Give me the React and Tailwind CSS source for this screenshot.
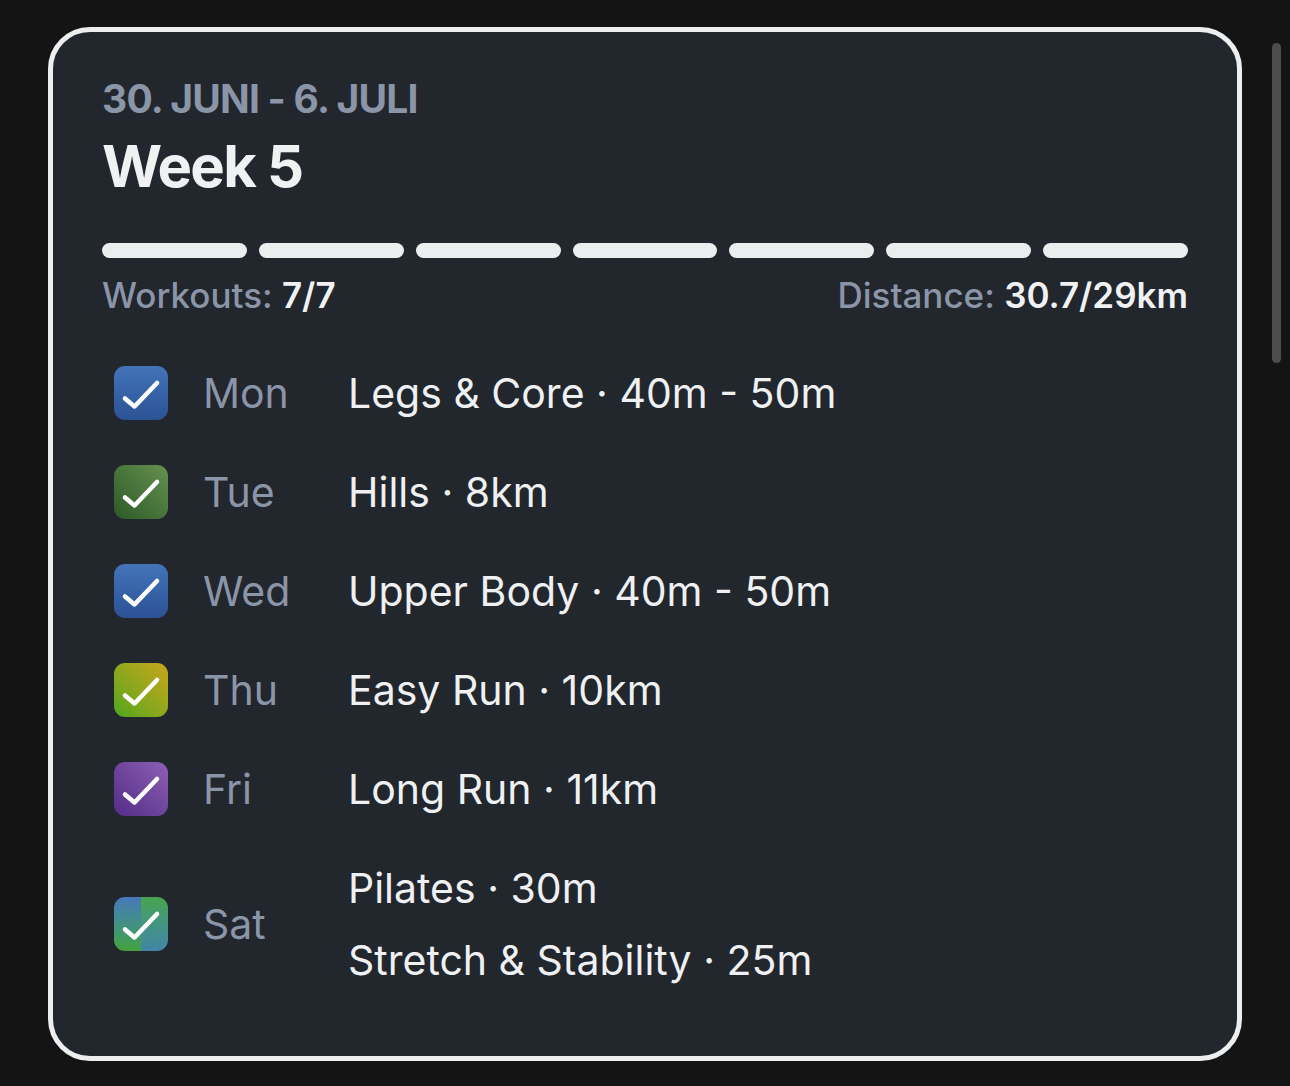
import React from 'react';

const days = [
    { day: 'Mon', items: ['Legs & Core · 40m - 50m'], box: 'bg-gradient-to-b from-[#4474ba] to-[#2b5294]' },
    { day: 'Tue', items: ['Hills · 8km'], box: 'bg-gradient-to-bl from-[#65924f] to-[#2d5a28]' },
    { day: 'Wed', items: ['Upper Body · 40m - 50m'], box: 'bg-gradient-to-b from-[#4474ba] to-[#2b5294]' },
    { day: 'Thu', items: ['Easy Run · 10km'], box: 'bg-gradient-to-bl from-[#c7a61a] to-[#48a61e]' },
    { day: 'Fri', items: ['Long Run · 11km'], box: 'bg-gradient-to-bl from-[#8c60b4] to-[#552b86]' },
    { day: 'Sat', items: ['Pilates · 30m', 'Stretch & Stability · 25m'], split: true },
];

const Check = () => (
    <svg viewBox="0 0 54 54" className="absolute inset-0 w-full h-full">
        <path d="M11 32.5 L20.5 40.5 L43 17" fill="none" stroke="#ffffff" strokeWidth="4.5" strokeLinecap="round" strokeLinejoin="round" />
    </svg>
);

const Box = ({ box, split }) => (
    <div className="relative ml-[12px] w-[54px] h-[54px] shrink-0 rounded-[11px] overflow-hidden">
        {split ? (
            <div className="flex w-full h-full">
                <div className="flex-1 bg-gradient-to-b from-[#4877ba] to-[#45a235]" />
                <div className="flex-1 bg-gradient-to-b from-[#4aa34c] to-[#4384a8]" />
            </div>
        ) : (
            <div className={`w-full h-full ${box}`} />
        )}
        <Check />
    </div>
);

export default function App() {
    return (
        <div className="relative min-h-screen bg-[#141414] pt-[27px] pl-[48px]" style={{ fontFamily: 'Inter, "Noto Sans", sans-serif' }}>
            <div className="w-[1194px] h-[1034px] border-[5px] border-[#eceef0] rounded-[42px] bg-[#22262d] px-[49px] pt-[45px]">
                <div className="text-[39px] leading-[44px] font-bold text-[#8b95a8] tracking-[-0.02em]">30. JUNI - 6. JULI</div>
                <div className="mt-[13px] text-[58px] leading-[64px] font-bold text-[#f0f1f3] tracking-[-0.03em]">Week 5</div>

                <div className="mt-[45px] flex gap-[12px]">
                    {Array.from({ length: 7 }).map((_, i) => (
                        <div key={i} className="flex-1 h-[15px] rounded-full bg-[#ecedef]" />
                    ))}
                </div>

                <div className="mt-[17px] flex justify-between text-[35px] leading-[40px]">
                    <div className="text-[#8b95a8] font-medium">
                        Workouts: <span className="text-[#f0f1f3] font-semibold">7/7</span>
                    </div>
                    <div className="text-[#8b95a8] font-medium">
                        Distance: <span className="text-[#f0f1f3] font-semibold">30.7/29km</span>
                    </div>
                </div>

                <div className="mt-[28px] flex flex-col">
                    {days.map((d) => (
                        <div key={d.day} className={`flex items-center ${d.split ? 'h-[171px]' : 'h-[99px]'}`}>
                            <Box box={d.box} split={d.split} />
                            <div className="ml-[35px] w-[145px] shrink-0 text-[41px] leading-[48px] text-[#8b95a8]">{d.day}</div>
                            <div className="flex flex-col">
                                {d.items.map((t) => (
                                    <div key={t} className={`text-[41px] text-[#eef0f2] ${d.split ? 'leading-[72px]' : 'leading-[48px]'}`}>{t}</div>
                                ))}
                            </div>
                        </div>
                    ))}
                </div>
            </div>
            <div className="absolute top-[43px] left-[1272px] w-[9px] h-[320px] rounded-full bg-[#4d4d4d]" />
        </div>
    );
}
